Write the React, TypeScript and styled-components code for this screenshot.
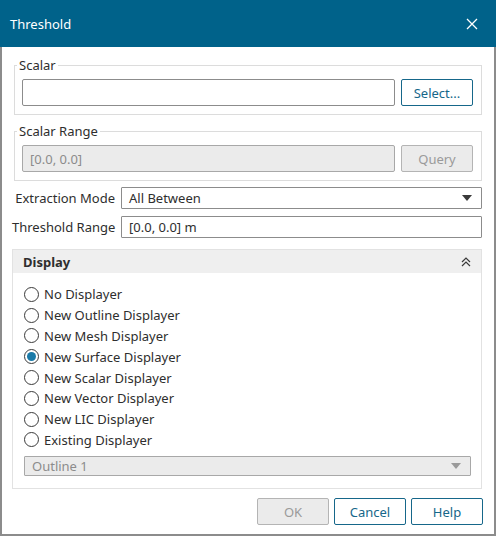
import { createGlobalStyle } from "styled-components";
import styled from "styled-components";

const GlobalStyle = createGlobalStyle`
  html, body {
    margin: 0;
    padding: 0;
    background: #ffffff;
  }
  * {
    box-sizing: border-box;
  }
`;

const teal = "#16678a";

const Window = styled.div`
  width: 496px;
  height: 536px;
  display: flex;
  flex-direction: column;
  border: 2px solid #8c8c8c;
  border-top: none;
  background: #ffffff;
  font-family: "Noto Sans", "Open Sans", sans-serif;
  font-size: 13px;
  color: #2e2e2e;
`;

const TitleBar = styled.div`
  height: 47px;
  margin: 0 -2px;
  padding: 0 18px 0 10px;
  background: #00628a;
  color: #ffffff;
  display: flex;
  align-items: center;
  justify-content: space-between;
  font-size: 13px;
`;

const Body = styled.div`
  flex: 1;
  display: flex;
  flex-direction: column;
  padding: 11px 10px 0 10px;
`;

const Group = styled.fieldset`
  margin: 0 2px 0 2px;
  padding: 7px 8px 8px 7px;
  border: 1px solid #dcdcdc;
  display: flex;
  align-items: center;
  gap: 6px;
  & + & {
    margin-top: 9px;
  }
`;

const Legend = styled.legend`
  padding: 0 2px;
  margin-left: -5px;
  font-size: 13px;
  color: #2e2e2e;
  line-height: 14px;
`;

const Field = styled.div<{ disabled?: boolean }>`
  flex: 1;
  height: 27px;
  border: 1px solid ${(p) => (p.disabled ? "#a8a8a8" : "#8c8c8c")};
  border-radius: 2px;
  background: ${(p) => (p.disabled ? "#ebebeb" : "#ffffff")};
  color: ${(p) => (p.disabled ? "#8c8c8c" : "#2e2e2e")};
  padding: 0 7px;
  display: flex;
  align-items: center;
`;

const Button = styled.div<{ disabled?: boolean }>`
  width: 72px;
  height: 27px;
  flex-shrink: 0;
  border: 1px solid ${(p) => (p.disabled ? "#b4b4b4" : teal)};
  border-radius: 2px;
  background: ${(p) => (p.disabled ? "#ebebeb" : "#ffffff")};
  color: ${(p) => (p.disabled ? "#9a9a9a" : teal)};
  display: flex;
  align-items: center;
  justify-content: center;
`;

const FormRow = styled.div`
  display: flex;
  align-items: center;
  margin-right: 2px;
  & + & {
    margin-top: 7px;
  }
`;

const FormLabel = styled.div`
  width: 109px;
  text-align: right;
  padding-right: 6px;
  white-space: nowrap;
`;

const Combo = styled(Field)`
  height: 22px;
  border-radius: 1px;
  justify-content: space-between;
  padding-right: 9px;
`;

const Rows = styled.div`
  margin-top: 6px;
`;

const Section = styled.div`
  margin-top: 11px;
  margin-right: 2px;
  border: 1px solid #e2e2e2;
`;

const SectionHead = styled.div`
  height: 23px;
  background: #efefef;
  padding: 0 10px;
  display: flex;
  align-items: center;
  justify-content: space-between;
  font-weight: 700;
`;

const SectionBody = styled.div`
  padding: 11px 10px 12px 11px;
  display: flex;
  flex-direction: column;
`;

const RadioRow = styled.div`
  height: 20.8px;
  display: flex;
  align-items: center;
  gap: 5px;
`;

const RadioDot = styled.span<{ checked?: boolean }>`
  width: 15px;
  height: 15px;
  border-radius: 50%;
  border: 1px solid #3a3a3a;
  display: flex;
  align-items: center;
  justify-content: center;
  &::after {
    content: "";
    width: 9px;
    height: 9px;
    border-radius: 50%;
    background: ${(p) => (p.checked ? "#1a7aa8" : "transparent")};
  }
`;

const DisabledCombo = styled(Combo)`
  margin-top: 6px;
  height: 23px;
`;

const Footer = styled.div`
  display: flex;
  justify-content: flex-end;
  gap: 5px;
  margin-top: 9px;
  margin-right: 1px;
`;

const Arrow = ({ color }: { color: string }) => (
  <svg width="10" height="6" viewBox="0 0 10 6">
    <path d="M0 0 L10 0 L5 6 Z" fill={color} />
  </svg>
);

const options = [
  "No Displayer",
  "New Outline Displayer",
  "New Mesh Displayer",
  "New Surface Displayer",
  "New Scalar Displayer",
  "New Vector Displayer",
  "New LIC Displayer",
  "Existing Displayer",
];

const App = () => {
  return (
    <>
      <GlobalStyle />
      <Window>
        <TitleBar>
          <span>Threshold</span>
          <svg width="12" height="12" viewBox="0 0 12 12">
            <path d="M1 1 L11 11 M11 1 L1 11" stroke="#ffffff" strokeWidth="1.3" />
          </svg>
        </TitleBar>
        <Body>
          <Group>
            <Legend>Scalar</Legend>
            <Field />
            <Button>Select...</Button>
          </Group>
          <Group>
            <Legend>Scalar Range</Legend>
            <Field disabled>[0.0, 0.0]</Field>
            <Button disabled>Query</Button>
          </Group>
          <Rows>
            <FormRow>
              <FormLabel>Extraction Mode</FormLabel>
              <Combo>
                <span>All Between</span>
                <Arrow color="#3a3a3a" />
              </Combo>
            </FormRow>
            <FormRow>
              <FormLabel>Threshold Range</FormLabel>
              <Combo>[0.0, 0.0] m</Combo>
            </FormRow>
          </Rows>
          <Section>
            <SectionHead>
              <span>Display</span>
              <svg width="10" height="10" viewBox="0 0 10 10">
                <path d="M1 5 L5 1 L9 5 M1 9 L5 5 L9 9" stroke="#3a3a3a" strokeWidth="1.2" fill="none" />
              </svg>
            </SectionHead>
            <SectionBody>
              {options.map((o) => (
                <RadioRow key={o}>
                  <RadioDot checked={o === "New Surface Displayer"} />
                  <span>{o}</span>
                </RadioRow>
              ))}
              <DisabledCombo disabled>
                <span>Outline 1</span>
                <Arrow color="#9a9a9a" />
              </DisabledCombo>
            </SectionBody>
          </Section>
          <Footer>
            <Button disabled>OK</Button>
            <Button>Cancel</Button>
            <Button>Help</Button>
          </Footer>
        </Body>
      </Window>
    </>
  );
};

export default App;
